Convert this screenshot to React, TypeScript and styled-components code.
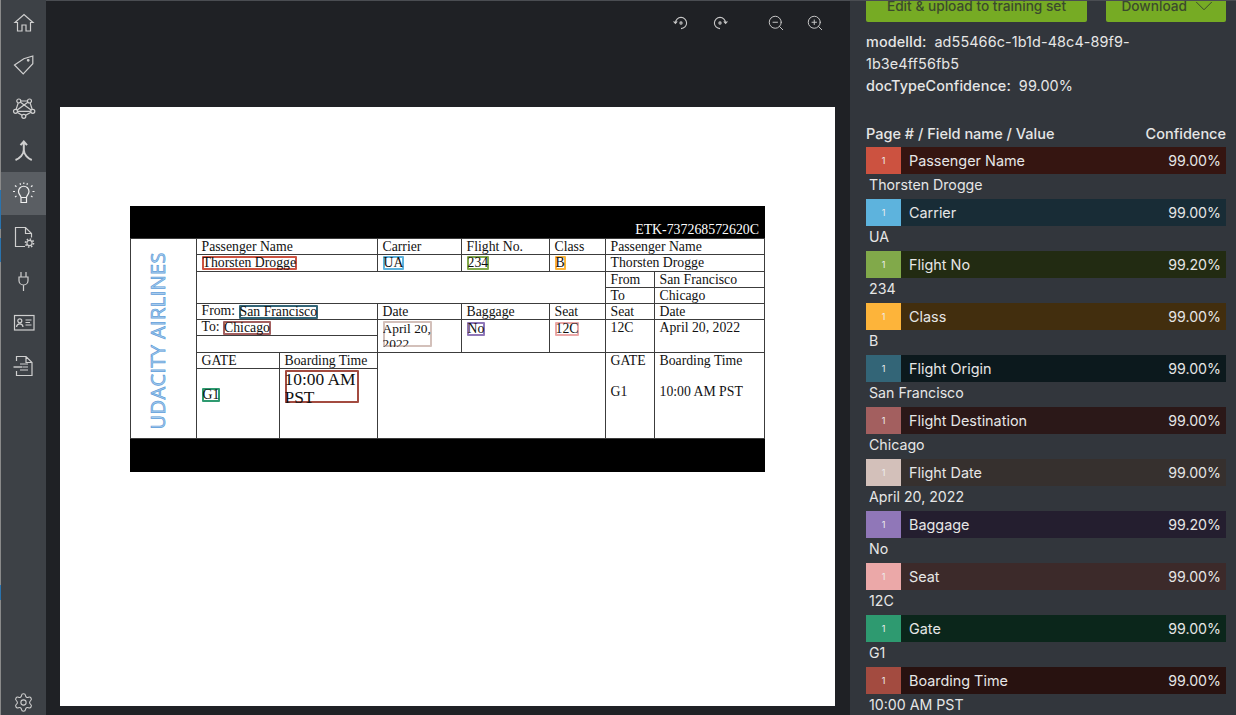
import React from 'react'
import styled, { createGlobalStyle } from 'styled-components'
import { Settings, ZoomIn, ZoomOut, ChevronDown } from 'lucide-react'

const GlobalStyle = createGlobalStyle`
  html, body {
    margin: 0;
    height: 100%;
    overflow: hidden;
    background: #1f2125;
    font-family: Inter, "Liberation Sans", sans-serif;
  }
`

const Wrap = styled.div`
  display: flex;
  height: 715px;
  width: 1236px;
  overflow: hidden;
`

const Edge = styled.div`
  width: 1px;
  flex: none;
  background: linear-gradient(
    #8a8a8a 0 190px,
    #2a73ad 190px 229px,
    #8a8a8a 229px 238px,
    #2a73ad 238px 262px,
    #8a8a8a 262px 585px,
    #2a73ad 585px 600px,
    #8a8a8a 600px
  );
`

const Sidebar = styled.nav`
  width: 45px;
  flex: none;
  display: flex;
  flex-direction: column;
  background: #3d4146;
`

const NavItem = styled.div<{ $active?: boolean }>`
  height: 43px;
  display: flex;
  align-items: center;
  justify-content: center;
  color: ${p => (p.$active ? '#f0f0f0' : '#cfcfcf')};
  background: ${p => (p.$active ? '#5a5e63' : 'transparent')};
  svg {
    fill: none;
    stroke: currentColor;
    stroke-width: 1.2;
  }
`

const NavFooter = styled(NavItem)`
  height: 26px;
  margin-top: auto;
`

const Canvas = styled.main`
  width: 804px;
  flex: none;
  display: flex;
  flex-direction: column;
  background: #1f2125;
  box-shadow: inset 0 1px 0 #4a4d52;
`

const Toolbar = styled.div`
  height: 107px;
  flex: none;
  display: flex;
  justify-content: flex-end;
  padding-right: 15px;
  color: #c8c8c8;
`

const ToolButton = styled.div<{ $gap?: boolean }>`
  width: 39.5px;
  height: 46px;
  margin-left: ${p => (p.$gap ? '16px' : '0')};
  display: flex;
  align-items: center;
  justify-content: center;
`

const Page = styled.div`
  height: 599px;
  margin: 0 15px 0 14px;
  padding: 99px 0 0 70px;
  box-sizing: border-box;
  background: #fff;
`

const Ticket = styled.div`
  width: 635px;
  font-family: "Liberation Serif", serif;
  font-size: 13.75px;
  color: #111;
`

const Band = styled.div<{ $h: number }>`
  height: ${p => p.$h}px;
  background: #000;
  color: #fff;
  display: flex;
  align-items: flex-end;
  justify-content: flex-end;
  padding-right: 6px;
  line-height: 16px;
  font-size: 13.85px;
`

const Table = styled.table`
  width: 634px;
  table-layout: fixed;
  border-collapse: collapse;
  td {
    border: 1px solid #3c3c3c;
    padding: 0 4.5px;
    line-height: 14px;
    vertical-align: middle;
    overflow: hidden;
    white-space: nowrap;
  }
`

const Row = styled.tr<{ $h: number }>`
  height: ${p => p.$h}px;
`

const TopCell = styled.td`
  && {
    vertical-align: top;
    padding-top: 1px;
  }
`

const GateCell = styled(TopCell)`
  && {
    padding-top: 18px;
  }
`

const StackCell = styled(TopCell)`
  && {
    line-height: 15.5px;
    padding-top: 0;
    white-space: pre-line;
  }
`

const LogoCell = styled.td`
  && {
    padding: 7px 12px 0 0;
    text-align: center;
  }
`

const Logo = styled.span`
  display: inline-block;
  writing-mode: vertical-rl;
  transform: rotate(180deg);
  font-family: "Open Sans", sans-serif;
  font-size: 20px;
  line-height: 24px;
  letter-spacing: 0.4px;
  color: #a9cbec;
  -webkit-text-stroke: 0.7px #5f9fdb;
`

const Mark = styled.span<{ $color: string; $w?: number; $h?: number; $size?: number; $lh?: number }>`
  display: inline-block;
  box-sizing: border-box;
  box-shadow: inset 0 0 0 2px ${p => p.$color};
  border-radius: 1px;
  padding: 0 ${p => (p.$w ? 0 : 1)}px;
  height: ${p => p.$h || 14}px;
  width: ${p => (p.$w ? `${p.$w}px` : 'auto')};
  line-height: ${p => p.$lh || 14}px;
  font-size: ${p => p.$size || 13.75}px;
  white-space: normal;
  overflow: hidden;
  vertical-align: middle;
`

const Panel = styled.aside`
  flex: 1;
  min-width: 0;
  background: #32363c;
  color: #e6e6e6;
  padding: 1px 10px 0 16px;
  box-shadow: inset 0 1px 0 #4a4d52;
  font-size: 14.2px;
`

const Actions = styled.div`
  display: flex;
  justify-content: space-between;
`

const ActionButton = styled.div<{ $w: number }>`
  width: ${p => p.$w}px;
  height: 21px;
  display: flex;
  justify-content: center;
  gap: 1.5px;
  background: #76ab24;
  color: #3b4a2c;
  line-height: 11px;
  font-size: 13.7px;
  font-weight: 500;
  border-radius: 0 0 2px 2px;
  overflow: hidden;
`

const DownloadCaret = styled(ChevronDown)`
  flex: none;
  margin: -10px -8px 0 0;
`

const Meta = styled.div`
  margin-top: 9px;
  line-height: 22px;
  width: 300px;
  font-size: 14.4px;
  letter-spacing: 0.1px;
  b {
    font-weight: 500;
    margin-right: 8px;
  }
`

const ListHead = styled.div`
  margin-top: 25px;
  height: 25px;
  display: flex;
  justify-content: space-between;
  font-weight: 500;
  line-height: 24px;
  font-size: 14.5px;
`

const FieldBar = styled.div<{ $bg: string }>`
  height: 27px;
  display: flex;
  align-items: center;
  background: ${p => p.$bg};
  padding-right: 5px;
`

const PageBadge = styled.div<{ $color: string }>`
  width: 35px;
  height: 100%;
  flex: none;
  display: flex;
  align-items: center;
  justify-content: center;
  background: ${p => p.$color};
  color: #eee;
  font-size: 9px;
`

const FieldName = styled.div`
  flex: 1;
  padding-left: 8px;
  font-size: 14.4px;
`

const FieldValue = styled.div`
  height: 25px;
  padding-left: 3px;
  line-height: 21px;
`

const fields = [
  { name: 'Passenger Name', conf: '99.00%', value: 'Thorsten Drogge', color: '#cc5240', bg: '#351511' },
  { name: 'Carrier', conf: '99.00%', value: 'UA', color: '#5db3dd', bg: '#182c36' },
  { name: 'Flight No', conf: '99.20%', value: '234', color: '#81a94a', bg: '#222b12' },
  { name: 'Class', conf: '99.00%', value: 'B', color: '#fdb43a', bg: '#422e0e' },
  { name: 'Flight Origin', conf: '99.00%', value: 'San Francisco', color: '#336577', bg: '#0c191d' },
  { name: 'Flight Destination', conf: '99.00%', value: 'Chicago', color: '#a35f5f', bg: '#2b1818' },
  { name: 'Flight Date', conf: '99.00%', value: 'April 20, 2022', color: '#d3c0ba', bg: '#36302e' },
  { name: 'Baggage', conf: '99.20%', value: 'No', color: '#9077b8', bg: '#241e2f' },
  { name: 'Seat', conf: '99.00%', value: '12C', color: '#eba8a8', bg: '#3c2a2a' },
  { name: 'Gate', conf: '99.00%', value: 'G1', color: '#2e9a70', bg: '#0b261b' },
  { name: 'Boarding Time', conf: '99.00%', value: '10:00 AM PST', color: '#a34b40', bg: '#281210' }
]

const colors = Object.fromEntries(fields.map(f => [f.name, f.color]))

const columns = [66, 83, 98, 84, 88, 56, 49, 110]

function NavIcon({ children }: { children: React.ReactNode }) {
  return (
    <svg width="24" height="24" viewBox="0 0 24 24">
      {children}
    </svg>
  )
}

function RotateIcon({ flip }: { flip?: boolean }) {
  return (
    <svg
      width="16"
      height="16"
      viewBox="0 0 16 16"
      fill="none"
      stroke="currentColor"
      strokeWidth="1.1"
      style={{ transform: flip ? 'scaleX(-1)' : undefined }}
    >
      <path d="M2.4 8A5.6 5.6 0 1 1 8 13.6" />
      <path d="M0.6 6.4L2.4 8.4L4.2 6.4" />
      <circle cx="8" cy="8" r="1.1" />
    </svg>
  )
}

export default function App() {
  return (
    <Wrap>
      <GlobalStyle />
      <Edge />
      <Sidebar>
        <NavItem>
          <NavIcon>
            <path d="M3 12.5L12 4.5L21 12.5H18.5V21H14V15H10V21H5.5V12.5Z" />
          </NavIcon>
        </NavItem>
        <NavItem>
          <NavIcon>
            <path d="M2.5 12L11.8 5.7L20.8 3V10.7L11.2 21Z" />
            <circle cx="16.2" cy="7.3" r="0.8" fill="currentColor" />
          </NavIcon>
        </NavItem>
        <NavItem>
          <NavIcon>
            <path d="M6.8 5H17.5L20.8 15.3L11.8 20.3L3.5 15.3ZM6.8 5L20.8 15.3M17.5 5L3.5 15.3M3.5 15.3H20.8" />
            <circle cx="6.8" cy="5" r="2" style={{ fill: '#3d4146' }} />
            <circle cx="17.5" cy="5" r="2" style={{ fill: '#3d4146' }} />
            <circle cx="3.5" cy="15.3" r="2" style={{ fill: '#3d4146' }} />
            <circle cx="20.8" cy="15.3" r="2" style={{ fill: '#3d4146' }} />
            <circle cx="11.8" cy="20.3" r="2" style={{ fill: '#3d4146' }} />
          </NavIcon>
        </NavItem>
        <NavItem>
          <NavIcon>
            <path
              d="M8.5 6.2L11.8 2.5L15 6.2M11.8 3V11C11.8 15.5 7.5 19.5 3.5 21M11.8 11C11.8 15.5 16 19.5 19.8 21"
              style={{ strokeWidth: 2 }}
            />
          </NavIcon>
        </NavItem>
        <NavItem $active>
          <NavIcon>
            <path d="M9 15.5C9 13.5 6.5 12.5 6.5 9.5A5.2 5.2 0 0 1 17 9.5C17 12.5 14.5 13.5 14.5 15.5ZM9 15.5V20.5H14.5V15.5" />
            <path d="M1 9.5H3M20.5 9.5H22.5M3 3.5L4.5 4.8M20.5 3.5L19 4.8M3 15L4.5 14M20.5 15L19 14M8 1.2L8.6 2.8M15.5 1.2L14.9 2.8M11.8 0.5V2" />
          </NavIcon>
        </NavItem>
        <NavItem>
          <NavIcon>
            <path d="M13 21.5H3.5V2.5H13.5L19.5 8.5V12.5M13.5 2.5V8.5H19.5" />
            <circle cx="17.5" cy="18" r="2.6" />
            <circle cx="17.5" cy="18" r="4" style={{ strokeWidth: 1.6 }} strokeDasharray="1.5 1.6" />
          </NavIcon>
        </NavItem>
        <NavItem>
          <NavIcon>
            <path d="M7 9H16V12.5A4.5 4.5 0 0 1 7 12.5ZM9 9V4M14 9V4M11.5 17V23" />
          </NavIcon>
        </NavItem>
        <NavItem>
          <NavIcon>
            <rect x="2.5" y="4.5" width="19.5" height="14.5" />
            <circle cx="7.8" cy="9.8" r="2" />
            <path d="M4.5 16C4.8 13.5 6 12.8 7.8 12.8S10.8 13.5 11 16M13.5 9H19.5M13.5 11.5H18M13.5 14H19.5" />
          </NavIcon>
        </NavItem>
        <NavItem>
          <NavIcon>
            <path d="M4.5 7V2.5H14L20 8.5V21.5H4.5V17M14 2.5V8.5H20M8 10H16M11 13H16M8 16H16" />
            <path d="M1.5 13H10.5" style={{ strokeWidth: 2 }} opacity="0.7" />
          </NavIcon>
        </NavItem>
        <NavFooter>
          <Settings size={21} strokeWidth={1.2} />
        </NavFooter>
      </Sidebar>
      <Canvas>
        <Toolbar>
          <ToolButton>
            <RotateIcon />
          </ToolButton>
          <ToolButton>
            <RotateIcon flip />
          </ToolButton>
          <ToolButton $gap>
            <ZoomOut size={18} strokeWidth={1.3} />
          </ToolButton>
          <ToolButton>
            <ZoomIn size={18} strokeWidth={1.3} />
          </ToolButton>
        </Toolbar>
        <Page>
          <Ticket>
            <Band $h={32}>ETK-737268572620C</Band>
            <Table>
              <colgroup>
                {columns.map((w, i) => (
                  <col key={i} style={{ width: w }} />
                ))}
              </colgroup>
              <tbody>
                <Row $h={16}>
                  <LogoCell rowSpan={9}>
                    <Logo>UDACITY AIRLINES</Logo>
                  </LogoCell>
                  <td colSpan={2}>Passenger Name</td>
                  <td>Carrier</td>
                  <td>Flight No.</td>
                  <td>Class</td>
                  <td colSpan={2}>Passenger Name</td>
                </Row>
                <Row $h={17}>
                  <td colSpan={2}>
                    <Mark $color={colors['Passenger Name']}>Thorsten Drogge</Mark>
                  </td>
                  <td>
                    <Mark $color={colors['Carrier']}>UA</Mark>
                  </td>
                  <td>
                    <Mark $color={colors['Flight No']}>234</Mark>
                  </td>
                  <td>
                    <Mark $color={colors['Class']}>B</Mark>
                  </td>
                  <td colSpan={2}>Thorsten Drogge</td>
                </Row>
                <Row $h={16}>
                  <td colSpan={5} rowSpan={2} />
                  <td>From</td>
                  <td>San Francisco</td>
                </Row>
                <Row $h={16}>
                  <td>To</td>
                  <td>Chicago</td>
                </Row>
                <Row $h={16}>
                  <td colSpan={2}>
                    From: <Mark $color={colors['Flight Origin']}>San Francisco</Mark>
                  </td>
                  <td>Date</td>
                  <td>Baggage</td>
                  <td>Seat</td>
                  <td>Seat</td>
                  <td>Date</td>
                </Row>
                <Row $h={16}>
                  <td colSpan={2}>
                    To: <Mark $color={colors['Flight Destination']}>Chicago</Mark>
                  </td>
                  <TopCell rowSpan={2}>
                    <Mark $color={colors['Flight Date']} $w={49} $h={26} $lh={15} $size={13.4}>
                      April 20, 2022
                    </Mark>
                  </TopCell>
                  <TopCell rowSpan={2}>
                    <Mark $color={colors['Baggage']}>No</Mark>
                  </TopCell>
                  <TopCell rowSpan={2}>
                    <Mark $color={colors['Seat']}>12C</Mark>
                  </TopCell>
                  <TopCell rowSpan={2}>12C</TopCell>
                  <TopCell rowSpan={2}>April 20, 2022</TopCell>
                </Row>
                <Row $h={17}>
                  <td colSpan={2} />
                </Row>
                <Row $h={16}>
                  <td>GATE</td>
                  <td>Boarding Time</td>
                  <td colSpan={3} rowSpan={2} />
                  <StackCell rowSpan={2}>{'GATE\n\u00a0\nG1'}</StackCell>
                  <StackCell rowSpan={2}>{'Boarding Time\n\u00a0\n10:00 AM PST'}</StackCell>
                </Row>
                <Row $h={70}>
                  <GateCell>
                    <Mark $color={colors['Gate']}>G1</Mark>
                  </GateCell>
                  <TopCell>
                    <Mark $color={colors['Boarding Time']} $w={74} $h={33} $size={17.4} $lh={18}>
                      10:00 AM PST
                    </Mark>
                  </TopCell>
                </Row>
              </tbody>
            </Table>
            <Band $h={33} />
          </Ticket>
        </Page>
      </Canvas>
      <Panel>
        <Actions>
          <ActionButton $w={221}>Edit &amp; upload to training set</ActionButton>
          <ActionButton $w={120}>
            Download
            <DownloadCaret size={30} strokeWidth={0.8} />
          </ActionButton>
        </Actions>
        <Meta>
          <div>
            <b>modelId:</b>ad55466c-1b1d-48c4-89f9-1b3e4ff56fb5
          </div>
          <div>
            <b>docTypeConfidence:</b>99.00%
          </div>
        </Meta>
        <ListHead>
          <span>Page # / Field name / Value</span>
          <span>Confidence</span>
        </ListHead>
        {fields.map(f => (
          <div key={f.name}>
            <FieldBar $bg={f.bg}>
              <PageBadge $color={f.color}>1</PageBadge>
              <FieldName>{f.name}</FieldName>
              <span>{f.conf}</span>
            </FieldBar>
            <FieldValue>{f.value}</FieldValue>
          </div>
        ))}
      </Panel>
    </Wrap>
  )
}
